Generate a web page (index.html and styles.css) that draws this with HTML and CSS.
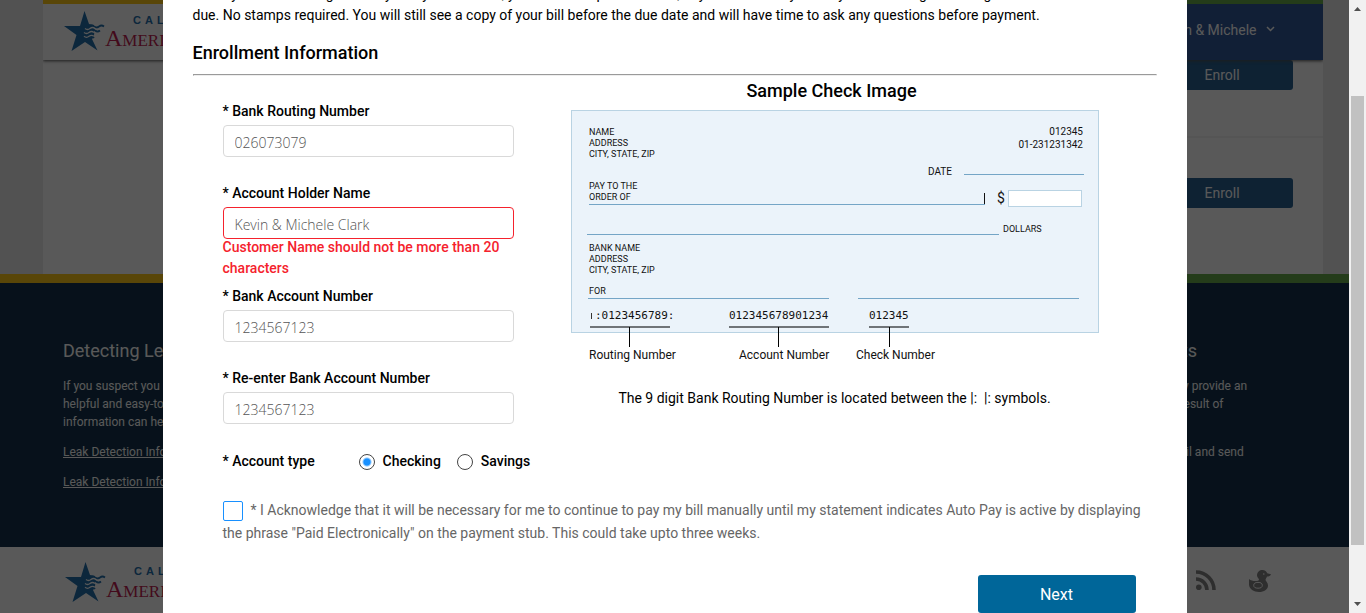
FILE: index.html
```html
<!DOCTYPE html>
<html lang="en">
<head>
<meta charset="utf-8">
<title>Auto Pay Enrollment</title>
<meta name="viewport" content="width=device-width, initial-scale=1">
<link rel="stylesheet" href="styles.css">
</head>
<body>
<svg class="defs" aria-hidden="true">
  <symbol id="star" viewBox="0 0 41 40">
    <path fill="#2470ad" d="M20.500 0L25 13L30 14L30 26L28 28L33.500 39.500L21 31L7.500 40L12.500 24L0 15H16Z"/>
    <path fill="none" stroke="#2470ad" stroke-width="1.700" d="M20 15.500q2.500 2 5 0t5 0t5 0t5 0M21 19.500q2.500 2 5 0t5 0t5 0M20 23.500q2.500 2 5 0t5 0M21 27q2.500 2 5 0t4 0"/>
    <path fill="none" stroke="#fff" stroke-width="1.300" d="M21 17.500q2.500 2 5 0t5 0t5 0M20 21.500q2.500 2 5 0t5 0M20 25.300q2.500 2 5 0t5 0"/>
  </symbol>
</svg>
<div class="app">
  <div class="viewport">
    <div class="page">
      <div class="container">
        <header class="header">
          <div class="header-brand">
            <a class="logo" href="#home">
              <svg class="logo-star" aria-hidden="true"><use href="#star"/></svg>
              <span class="logo-text"><span class="logo-top">CALIFORNIA</span><span class="logo-main">American Water</span></span>
            </a>
          </div>
          <button class="header-user" type="button">Kevin &amp; Michele
            <svg width="9" height="6" viewBox="0 0 9 6" aria-hidden="true"><path d="M1 1l3.500 3.500L8 1" fill="none" stroke="currentColor" stroke-width="1.500"/></svg>
          </button>
        </header>
        <section class="offer"><button class="enroll" type="button">Enroll</button></section>
        <section class="offer offer-last"><button class="enroll" type="button">Enroll</button></section>
      </div>
      <footer class="footer">
        <div class="stripe"></div>
        <div class="footer-main">
          <section class="footer-left">
            <h2>Detecting Leaks</h2>
            <p>If you suspect you may have a leak,<br>helpful and easy-to-follow<br>information can help you.</p>
            <p><a href="#kit">Leak Detection Information Kit</a></p>
            <p><a href="#video">Leak Detection Information Video</a></p>
          </section>
          <section class="footer-right">
            <h2>Grants</h2>
            <p>you may provide an<br>as the result of</p>
            <p class="footer-mail">by e-mail and send</p>
          </section>
        </div>
        <div class="footer-bottom">
          <a class="logo" href="#home">
            <svg class="logo-star" aria-hidden="true"><use href="#star"/></svg>
            <span class="logo-text"><span class="logo-top">CALIFORNIA</span><span class="logo-main">American Water</span></span>
          </a>
          <nav class="social" aria-label="Social">
            <a href="#rss" aria-label="RSS"><svg width="20" height="20" viewBox="0 0 20 20"><circle cx="2.800" cy="17.200" r="2.800"/><path d="M0 9A11 11 0 0 1 11 20M0 2A18 18 0 0 1 18 20" fill="none" stroke="#848484" stroke-width="3.600"/></svg></a>
            <a href="#duck" aria-label="Duck"><svg width="22" height="22" viewBox="0 0 22 22"><path d="M8 5.500C8 2 10.500 0 13.500 0c2.500 0 4 1.300 4.700 3.200L22 4.200c-.5 1.500-2 2.300-4 2.300-.4 1.500-1.500 2.300-1.500 3.500 0 1 2.500 2.500 2.500 5.500 0 4-4 6.500-9 6.500S0 19 0 14.500V9c1.500 1.500 4 2 6.500 2 2 0 3.500-.5 3.500-1.500S8 7.500 8 5.500z"/><circle cx="14.800" cy="4" r=".8" fill="#fff"/><ellipse cx="9" cy="15.300" rx="4.300" ry="2.900" fill="none" stroke="#fff"/></svg></a>
          </nav>
        </div>
      </footer>
    </div>
    <div class="mask"></div>
    <main class="modal" role="dialog" aria-label="Auto Pay enrollment">
      <div class="modal-body">
        <p class="intro">When you are enrolling in a daily utility bill method, you can see a postal notice, any bill amount by the day we are using our billing<br>due. No stamps required. You will still see a copy of your bill before the due date and will have time to ask any questions before payment.</p>
        <h1>Enrollment Information</h1>
        <hr>
        <form class="form">
          <div class="columns">
            <div class="fields">
              <div class="field"><label for="routing">* Bank Routing Number</label><input id="routing" type="text" value="026073079"></div>
              <div class="field field-invalid"><label for="holder">* Account Holder Name</label><input id="holder" type="text" value="Kevin &amp; Michele Clark" aria-invalid="true" aria-describedby="holder-error"><p class="error" id="holder-error">Customer Name should not be more than 20 characters</p></div>
              <div class="field"><label for="account">* Bank Account Number</label><input id="account" type="text" value="1234567123"></div>
              <div class="field"><label for="account2">* Re-enter Bank Account Number</label><input id="account2" type="text" value="1234567123"></div>
              <div class="types" role="radiogroup" aria-labelledby="type-label">
                <span id="type-label" class="types-label">* Account type</span>
                <label><input type="radio" name="type" checked>Checking</label>
                <label><input type="radio" name="type">Savings</label>
              </div>
            </div>
            <figure class="sample">
              <figcaption>Sample Check Image</figcaption>
              <svg class="check" width="528" height="254" viewBox="0 0 528 254" role="img" aria-label="Sample check">
                <rect x=".5" y=".5" width="527" height="222" fill="#ebf3fa" stroke="#b9d3e3"/>
                <g class="check-small">
                  <text x="18" y="25">NAME</text><text x="18" y="36">ADDRESS</text><text x="18" y="47">CITY, STATE, ZIP</text>
                  <text x="18" y="79">PAY TO THE</text><text x="18" y="90">ORDER OF</text>
                  <text x="18" y="141">BANK NAME</text><text x="18" y="152">ADDRESS</text><text x="18" y="163">CITY, STATE, ZIP</text>
                  <text x="18" y="184">FOR</text><text x="432" y="122">DOLLARS</text>
                </g>
                <g class="check-medium">
                  <text x="512" y="25" text-anchor="end">012345</text><text x="512" y="38" text-anchor="end">01-231231342</text>
                  <text x="357" y="65">DATE</text>
                </g>
                <path d="M393 64.500H513M18 94.500H414M16 124.500H428M17 188.500H258M287 188.500H508" stroke="#74a5c6" fill="none"/>
                <path d="M413.500 83v11" stroke="#111"/>
                <text class="check-dollar" x="426" y="93">$</text>
                <rect x="437.500" y="80.500" width="73" height="16" fill="#fff" stroke="#b9d3e3"/>
                <path d="M20.500 203v6" stroke="#333"/>
                <g class="check-mono">
                  <text x="24" y="209">:0123456789:</text><text x="158" y="209">012345678901234</text><text x="298" y="209">012345</text>
                </g>
                <path d="M19 217H99M158 217H258M298 217H338" stroke="#6f7478" stroke-width="2" fill="none"/>
                <path d="M58.500 217v20M207.500 217v20M318.500 217v20" stroke="#000"/>
                <g class="check-caption">
                  <text x="18" y="249">Routing Number</text><text x="168" y="249">Account Number</text><text x="285" y="249">Check Number</text>
                </g>
              </svg>
              <p>The 9 digit Bank Routing Number is located between the |:&nbsp; |: symbols.</p>
            </figure>
          </div>
          <label class="ack"><input type="checkbox">* I Acknowledge that it will be necessary for me to continue to pay my bill manually until my statement indicates Auto Pay is active by displaying the phrase "Paid Electronically" on the payment stub. This could take upto three weeks.</label>
          <div class="actions"><button class="next" type="button">Next</button></div>
        </form>
      </div>
    </main>
  </div>
  <div class="scrollbar" aria-hidden="true">
    <svg width="17" height="17" viewBox="0 0 17 17"><path d="M5 11h7L8.500 7z" fill="#505050"/></svg>
    <div class="track"><div class="thumb"></div></div>
    <svg width="17" height="17" viewBox="0 0 17 17"><path d="M5 6h7L8.500 10z" fill="#505050"/></svg>
  </div>
</div>
</body>
</html>
```
FILE: styles.css
```css
* { box-sizing: border-box; }
body { margin: 0; font: 14px/21px Roboto, sans-serif; color: #000; }
h1, h2, p, figure { margin: 0; }
button, input { font: inherit; }
.defs { position: absolute; width: 0; height: 0; }

.app { display: flex; height: 100vh; overflow: hidden; }
.viewport { flex: 1; position: relative; overflow: hidden; }

/* page behind the dialog, as wide as the window */
.page { width: 100vw; min-height: 100%; background: #ebebeb; }
.container { max-width: 1280px; height: 274px; margin: 0 auto; background: #fff; overflow: hidden; }
.header { display: flex; height: 60px; box-shadow: 0 1px 3px #555; position: relative; }
.header-brand { flex: 1; padding: 7px 21px; border-top: 4px solid #ffc817; }
.header-user { flex: 1; border: 0; border-top: 4px solid #67ab4a; background: #31599a; color: #fff; text-align: right; padding: 0 48px 4px 0; }
.header-user svg { margin: 0 0 3px 6px; }
.logo { display: flex; text-decoration: none; }
.logo-star { width: 41px; height: 40px; flex: none; }
.logo-text { display: flex; flex-direction: column; white-space: nowrap; }
.logo-top { font: bold 11px/13px "Liberation Sans", sans-serif; letter-spacing: 4px; color: #2470ad; padding: 3px 0 0 28px; }
.logo-main { font: 24px/22px "Liberation Serif", serif; font-variant: small-caps; color: #c01f52; }
.offer { display: flex; justify-content: flex-end; width: 50%; height: 78px; margin-left: auto; padding: 0 30px; border-bottom: 2px solid #f2f2f2; }
.offer-last { height: 136px; padding-top: 40px; border: 0; }
.enroll { width: 142px; height: 30px; border: 0; border-radius: 3px; background: #286192; color: #fff; }

.stripe { height: 9px; background: linear-gradient(90deg, #ffc817 50%, #67ab4a 50%); }
.footer-main { display: flex; justify-content: space-between; height: 264px; padding: 57px 78px 0 63px; background: #14334d; color: #fff; font-size: 12px; line-height: 18px; }
.footer-main h2 { font-size: 18px; line-height: 22px; font-weight: 400; margin-bottom: 15px; }
.footer-main p { margin-bottom: 12px; }
.footer-main a { color: inherit; }
.footer-right { width: 144px; white-space: nowrap; }
.footer-right .footer-mail { margin-top: 30px; }
.footer-bottom { display: flex; justify-content: space-between; height: 66px; padding: 15px 95px 0 65px; background: #fff; }
.social { display: flex; gap: 33px; padding-top: 8px; }
.social a { display: block; height: 22px; }
.social svg { fill: #848484; }

.mask { position: absolute; inset: 0; background: rgba(0, 0, 0, .65); }

/* dialog */
.modal { position: absolute; inset: 0; margin: 0 auto; max-width: 1024px; background: #fff; overflow: hidden; }
.modal-body { padding: 0 30px; margin-top: -16px; }
.intro { white-space: nowrap; }
h1 { font-size: 18px; line-height: 24px; font-weight: 500; margin: 15px 0 9px; }
hr { margin: 0; border: 1px inset #eee; }
.form { padding: 0 13px 0 30px; }
.columns { display: flex; gap: 39px; }
.fields { width: 309px; flex: none; padding-top: 25px; font-weight: 500; }
.field { width: 291px; margin-bottom: 26px; }
.field label { display: block; margin-bottom: 3px; }
.field input { display: block; width: 100%; height: 32px; padding: 2px 11px 0; border: 1px solid #d9d9d9; border-radius: 4px; font: 300 14px "Open Sans", sans-serif; color: #555; }
.field-invalid { margin-bottom: 7px; }
.field-invalid input { border-color: #f5222d; }
.error { margin-top: -2px; color: #f5222d; }
.types { display: flex; align-items: center; gap: 16px; padding-top: 1px; white-space: nowrap; }
.types-label { width: 120px; }
.types label { display: flex; align-items: center; gap: 8px; }
.types input { appearance: none; width: 16px; height: 16px; margin: 0; border: 1px solid #444; border-radius: 50%; background: #fff; }
.types input:checked { background: radial-gradient(circle, #1890ff 3px, transparent 5px); }

.sample { flex: none; width: 528px; text-align: center; }
.sample figcaption { font-size: 18px; line-height: 24px; font-weight: 500; padding: 3px 6px 7px 0; }
.check { display: block; fill: #111; }
.check-small { font-size: 9px; }
.check-medium { font-size: 10px; }
.check-dollar { font-size: 14px; }
.check-mono { font: 11px "DejaVu Sans Mono", monospace; }
.check-caption { font-size: 12px; }
.sample p { padding-top: 24px; }

.ack { display: block; margin-top: 27px; line-height: 23px; color: #666; }
.ack input { appearance: none; width: 20px; height: 20px; margin: 0 8px 0 0; border: 1px solid #1890ff; border-radius: 2px; vertical-align: middle; }
.actions { display: flex; justify-content: flex-end; padding: 30px 8px 0 0; }
.next { width: 158px; height: 38px; border: 0; border-radius: 3px; background: #069; color: #fff; font-size: 16px; }

.scrollbar { position: relative; width: 17px; display: flex; flex-direction: column; background: #f1f1f1; }
.track { flex: 1; padding: 79px 2px 0; }
.thumb { height: 449px; background: #c1c1c1; }
```
